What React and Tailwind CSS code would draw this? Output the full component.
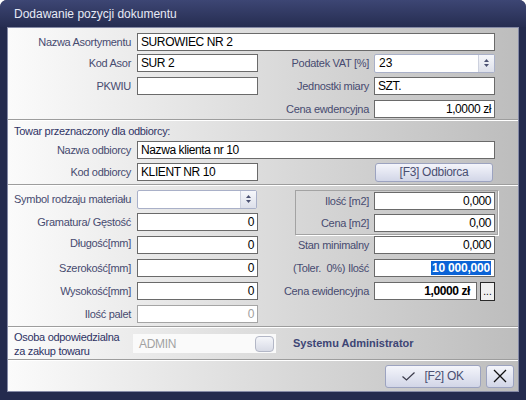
import React from "react";

const LBL = "text-[11px] tracking-[-0.3px] text-[#474b70] text-right whitespace-nowrap leading-none";

function Input({ value = "", className = "", right, bold, dim }) {
  return (
    <div
      className={`h-[18px] bg-white border flex items-center px-[3px] text-[12px] tracking-[-0.4px] leading-none whitespace-nowrap ${
        dim ? "border-[#a5a5a5] text-[#a0a0a0]" : "border-[#6a6a6a] text-black"
      } ${right ? "justify-end" : ""} ${bold ? "font-bold" : ""} ${className}`}
    >
      {value}
    </div>
  );
}

function Spin({ value = "", className = "" }) {
  return (
    <div className={`h-[19px] flex bg-white border border-[#a9b0c8] rounded-[2px] ${className}`}>
      <div className="flex-1 flex items-center px-[4px] text-[12px] leading-none text-black">{value}</div>
      <div className="w-[16px] border-l border-[#cdd1de] bg-linear-to-b from-[#f6f7fb] to-[#dde0ea] flex flex-col items-center justify-center gap-[2px]">
        <svg width="5" height="3" viewBox="0 0 5 3"><path d="M0 3L2.5 0L5 3Z" fill="#4b5172" /></svg>
        <svg width="5" height="3" viewBox="0 0 5 3"><path d="M0 0L2.5 3L5 0Z" fill="#4b5172" /></svg>
      </div>
    </div>
  );
}

const Sep = () => <div className="h-[2px] border-t border-[#9d9d9d] border-b border-b-white" />;

const BTN =
  "rounded-[3px] border border-[#9ca3c0] bg-linear-to-b from-[#f4f5fb] to-[#d2d6e7] flex items-center justify-center text-[12px] tracking-[-0.3px] text-[#4a4f72] leading-none";

export default function App() {
  return (
    <div className="w-[526px] h-[400px] bg-white font-['Liberation_Sans',sans-serif]">
      <div className="w-full h-full bg-[#242b4e] rounded-t-[7px] flex flex-col overflow-hidden">
        {/* title */}
        <div className="h-[27px] shrink-0 bg-linear-to-b from-[#3d4674] to-[#262d51] flex items-center pl-[14px] text-[12px] text-[#e6e9f5]">
          Dodawanie pozycji dokumentu
        </div>

        <div className="mx-[7px] h-[365px] border border-[#858aa6] bg-linear-to-r from-[#fbfbfb] to-[#bdbdbd] flex flex-col">
          {/* section 1 */}
          <div className="h-[91px] pt-[5px]">
            <div className="flex items-center h-[18px]">
              <div className={`${LBL} w-[123px]`}>Nazwa Asortymentu</div>
              <Input value="SUROWIEC NR 2" className="ml-[6px] w-[358px]" />
            </div>
            <div className="flex items-center h-[18px] mt-[3px]">
              <div className={`${LBL} w-[123px]`}>Kod Asor</div>
              <Input value="SUR 2" className="ml-[6px] w-[121px]" />
              <div className={`${LBL} w-[111px]`}>Podatek VAT [%]</div>
              <Spin value="23" className="ml-[5px] w-[121px]" />
            </div>
            <div className="flex items-center h-[18px] mt-[5px]">
              <div className={`${LBL} w-[123px]`}>PKWIU</div>
              <Input className="ml-[6px] w-[121px]" />
              <div className={`${LBL} w-[111px]`}>Jednostki miary</div>
              <Input value="SZT." className="ml-[5px] w-[121px]" />
            </div>
            <div className="flex items-center h-[18px] mt-[5px] pl-[250px]">
              <div className={`${LBL} w-[111px]`}>Cena ewdencyjna</div>
              <Input value="1,0000 zł" right className="ml-[5px] w-[121px]" />
            </div>
          </div>
          <Sep />

          {/* section 2 */}
          <div className="h-[63px] pt-[3px]">
            <div className="h-[14px] pl-[6px] text-[11px] tracking-[-0.3px] leading-[14px] text-[#2f3466]">
              Towar przeznaczony dla odbiorcy:
            </div>
            <div className="flex items-center h-[18px] mt-[3px]">
              <div className={`${LBL} w-[123px]`}>Nazwa odbiorcy</div>
              <Input value="Nazwa klienta nr 10" className="ml-[6px] w-[358px]" />
            </div>
            <div className="flex items-center h-[18px] mt-[4px]">
              <div className={`${LBL} w-[123px]`}>Kod odbiorcy</div>
              <Input value="KLIENT NR 10" className="ml-[6px] w-[121px]" />
              <button className={`${BTN} ml-[117px] w-[118px] h-[19px]`}>[F3] Odbiorca</button>
            </div>
          </div>
          <Sep />

          {/* section 3 */}
          <div className="h-[140px] flex">
            <div className="w-[250px] pt-[4px] flex flex-col gap-[5px]">
              <div className="flex items-center h-[18px]">
                <div className={`${LBL} w-[123px]`}>Symbol rodzaju materiału</div>
                <Spin className="ml-[6px] w-[120px]" />
              </div>
              <div className="flex items-center h-[18px]">
                <div className={`${LBL} w-[123px]`}>Gramatura/ Gęstość</div>
                <Input value="0" right className="ml-[6px] w-[121px]" />
              </div>
              <div className="flex items-start h-[18px]">
                <div className={`${LBL} w-[123px] pt-[2px]`}>Długość[mm]</div>
                <Input value="0" right className="ml-[6px] w-[121px]" />
              </div>
              <div className="flex items-center h-[18px]">
                <div className={`${LBL} w-[123px]`}>Szerokość[mm]</div>
                <Input value="0" right className="ml-[6px] w-[121px]" />
              </div>
              <div className="flex items-center h-[18px]">
                <div className={`${LBL} w-[123px]`}>Wysokość[mm]</div>
                <Input value="0" right className="ml-[6px] w-[121px]" />
              </div>
              <div className="flex items-center h-[18px]">
                <div className={`${LBL} w-[123px]`}>Ilość palet</div>
                <Input value="0" right dim className="ml-[6px] w-[121px]" />
              </div>
            </div>

            <div className="pt-[4px] flex flex-col">
              <div className="ml-[37px] w-[203px] h-[45px] border border-[#a3a3a3] shadow-[1px_1px_0_#ffffff] pt-[1px] flex flex-col gap-[4px]">
                <div className="flex items-center h-[18px]">
                  <div className={`${LBL} w-[73px]`}>Ilość [m2]</div>
                  <Input value="0,000" right className="ml-[5px] w-[121px]" />
                </div>
                <div className="flex items-center h-[18px]">
                  <div className={`${LBL} w-[73px]`}>Cena [m2]</div>
                  <Input value="0,00" right className="ml-[5px] w-[121px]" />
                </div>
              </div>
              <div className="flex items-center h-[18px] mt-[1px]">
                <div className={`${LBL} w-[111px]`}>Stan minimalny</div>
                <Input value="0,000" right className="ml-[5px] w-[121px]" />
              </div>
              <div className="flex items-center h-[18px] mt-[5px]">
                <div className={`${LBL} w-[111px] whitespace-pre`}>(Toler.  0%) Ilość</div>
                <div className="ml-[5px] w-[121px] h-[18px] bg-white border border-[#6a6a6a] flex items-center justify-end pr-[3px]">
                  <span className="bg-[#0b63d6] text-white font-bold text-[12px] tracking-[-0.2px] leading-[14px] px-[1px]">10 000,000</span>
                </div>
              </div>
              <div className="flex items-center h-[18px] mt-[5px]">
                <div className={`${LBL} w-[111px]`}>Cena ewidencyjna</div>
                <Input value="1,0000 zł" right bold className="ml-[5px] w-[103px] pr-[6px]" />
                <div className="ml-[3px] w-[15px] h-[19px] border border-[#2a2a2a] bg-[#f0f0f0] flex items-end justify-center pb-[3px] text-[10px] leading-none text-black">
                  ...
                </div>
              </div>
            </div>
          </div>
          <Sep />

          {/* section 4 */}
          <div className="h-[31px] flex items-center">
            <div className="w-[125px] pl-[6px] text-[11px] tracking-[-0.3px] leading-[14px] text-[#2d3264]">
              Osoba odpowiedzialna
              <br />
              za zakup towaru
            </div>
            <div className="w-[143px] h-[19px] bg-[#fafafa] flex items-center pl-[6px] pr-[2px] text-[12px] tracking-[-0.3px] text-[#a2a2a2] leading-none">
              <span className="flex-1">ADMIN</span>
              <div className="w-[19px] h-[16px] rounded-[4px] border border-[#b3b7c6] bg-linear-to-b from-[#f5f6fa] to-[#d8dbe6]" />
            </div>
            <div className="ml-[17px] text-[11px] font-bold text-[#3d4575]">Systemu Administrator</div>
          </div>
          <Sep />

          {/* buttons */}
          <div className="flex-1 flex items-center justify-end pr-[4px] gap-[5px]">
            <button className={`${BTN} w-[96px] h-[23px] gap-[9px]`}>
              <svg width="13" height="9" viewBox="0 0 13 9">
                <path d="M0.5 4.5L4.5 8L12.5 0.5" fill="none" stroke="#3a3a4a" strokeWidth="1.2" />
              </svg>
              <span>[F2] OK</span>
            </button>
            <button className={`${BTN} w-[28px] h-[23px]`}>
              <svg width="14" height="14" viewBox="0 0 14 14">
                <path d="M1 1L13 13M13 1L1 13" stroke="#111" strokeWidth="1.3" />
              </svg>
            </button>
          </div>
        </div>
      </div>
    </div>
  );
}
